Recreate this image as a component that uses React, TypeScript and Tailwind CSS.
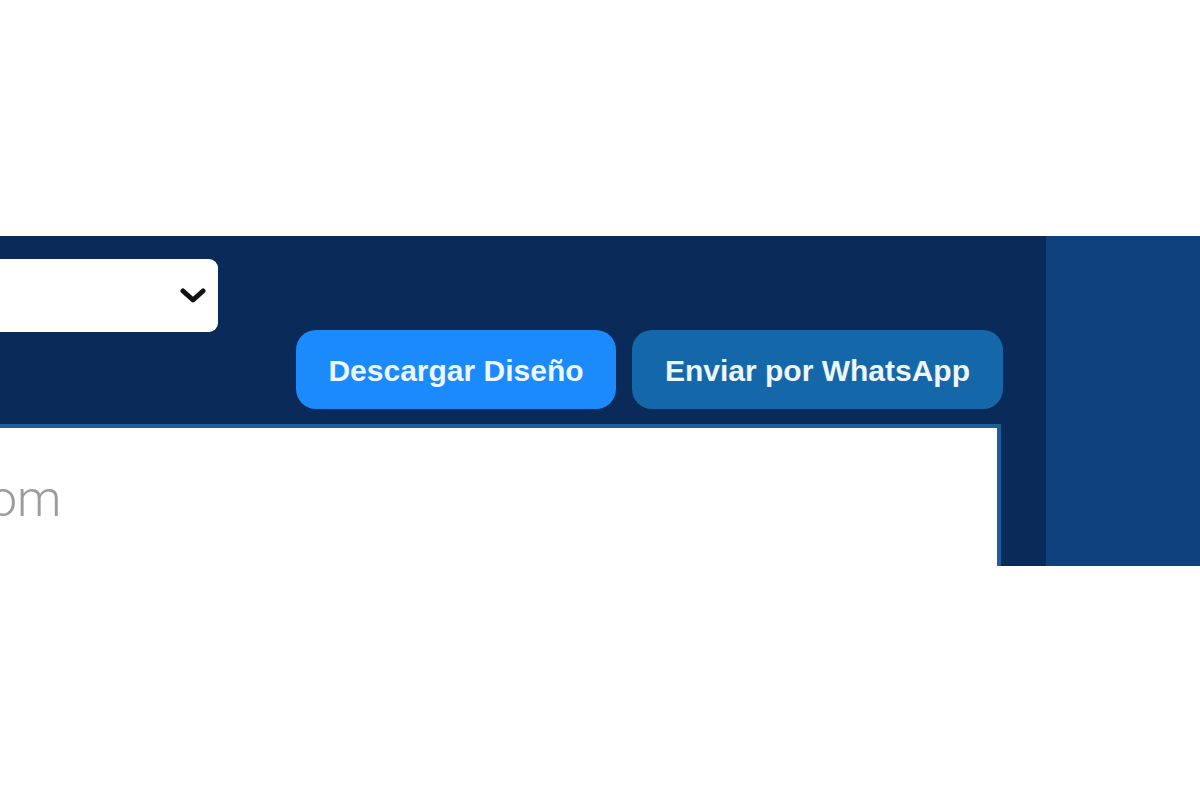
import React from 'react';

const App: React.FC = () => {
  return (
    <div className="min-h-[802px] w-[1200px] bg-white pt-[236px] font-['Liberation_Sans',Arial,sans-serif]">
      <div className="flex h-[330px] overflow-hidden">
        {/* Editor area */}
        <div className="flex w-[1046px] flex-col bg-[#0a2b5a] pt-[23px]">
          <div className="-ml-[100px] flex h-[73px] w-[318px] items-center justify-end rounded-[9px] bg-white pr-[12px]">
            <svg width="26" height="18" viewBox="0 0 26 18" fill="none">
              <path d="M3 4 L13 13 L23 4" stroke="#111" strokeWidth="5" strokeLinecap="round" strokeLinejoin="round" />
            </svg>
          </div>

          <div className="-mt-[2px] flex justify-end gap-[16px] pr-[43px]">
            <button className="flex h-[79px] w-[320px] items-center justify-center rounded-[20px] bg-[#1a8afc] pt-[2px] text-[30px] font-bold text-[#eef6ff]">
              Descargar Diseño
            </button>
            <button className="flex h-[79px] w-[371px] items-center justify-center rounded-[20px] bg-[#1467a9] pt-[2px] text-[30px] font-bold text-[#eef6ff]">
              Enviar por WhatsApp
            </button>
          </div>

          <div className="mr-[45px] mt-[15px] flex-1 border-r-[4px] border-t-[4px] border-[#1c5f9a] bg-white pt-[46px]">
            <div className="-ml-[11px] font-['Roboto',sans-serif] text-[50px] font-light leading-none text-[#9c9c9c]">om</div>
          </div>
        </div>

        {/* Side panel */}
        <div className="flex-1 bg-[#0f417f]" />
      </div>
    </div>
  );
};

export default App;
